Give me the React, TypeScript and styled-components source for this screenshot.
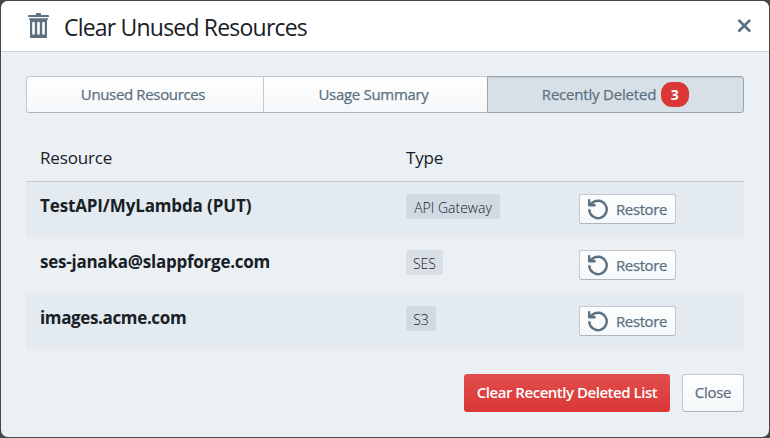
import React from "react";
import styled, { createGlobalStyle, css } from "styled-components";

const GlobalStyle = createGlobalStyle`
  *, *::before, *::after { box-sizing: border-box; }
  body {
    margin: 0;
    background: #44464b;
    color: #182026;
    font-family: "Segoe UI", "Open Sans", "Noto Sans", sans-serif;
    font-size: 15px;
    line-height: 20px;
  }
  button { font: inherit; margin: 0; padding: 0; cursor: pointer; }
`;

const Backdrop = styled.div`
  width: 100vw;
  height: 100vh;
  padding: 1px;
  background: #44464b;
`;

const Dialog = styled.section`
  height: 100%;
  display: flex;
  flex-direction: column;
  border-radius: 7px;
  background: #ebf0f4;
  overflow: hidden;
`;

const Header = styled.header`
  height: 51px;
  flex: none;
  display: flex;
  align-items: center;
  padding: 0 16px 0 27px;
  background: #fff;
  border-bottom: 1px solid #cbd0d4;
`;

const TrashSvg = styled.svg`
  width: 21px;
  height: 26px;
  flex: none;
  margin-right: 15px;
`;

const Title = styled.h1`
  flex: 1;
  margin: 0;
  font-size: 23px;
  font-weight: 400;
  line-height: 30px;
  letter-spacing: -0.8px;
  padding-top: 1px;
`;

const IconButton = styled.button`
  display: flex;
  border: 0;
  background: none;
`;

const Body = styled.main`
  flex: 1;
  padding: 24px 25px 0;
`;

const raised = css`
  border: 1px solid #c5c9cd;
  border-bottom-color: #afb4b9;
  background: linear-gradient(#fefefe, #f5f8fa);
  color: #5c7080;
  -webkit-text-stroke: 0.25px #5c7080;
`;

const Tabs = styled.nav`
  display: grid;
  grid-template-columns: 237px 224px 257px;
  height: 37px;
`;

const Tab = styled.button<{ $active?: boolean }>`
  ${raised}
  display: flex;
  align-items: center;
  justify-content: center;
  gap: 5px;
  border-right-width: 0;
  &:first-child { border-radius: 3px 0 0 3px; }
  &:last-child { border-radius: 0 3px 3px 0; border-right-width: 1px; }
  ${(p) =>
    p.$active &&
    css`
      background: #d8e0e7;
      border-color: #9ba5ae;
      box-shadow: inset 0 1px 1px #c4ccd4;
    `}
`;

const TabLabel = styled.span<{ $track: number; $inset?: number }>`
  padding: 0 ${(p) => p.$inset ?? 0}px 2px 0;
  letter-spacing: ${(p) => p.$track}px;
`;

const Count = styled.span`
  width: 28px;
  height: 25px;
  padding-right: 1px;
  border-radius: 11px;
  background: #db3737;
  color: #fff;
  -webkit-text-stroke: 0;
  font-weight: 700;
  font-size: 14px;
  line-height: 25px;
  text-align: center;
`;

const Table = styled.div`
  margin-top: 24px;
`;

const Row = styled.div<{ $striped?: boolean }>`
  display: grid;
  grid-template-columns: 366px 173px 1fr;
  align-items: start;
  height: 56px;
  padding: 13px 14px 0;
  background: ${(p) => (p.$striped ? "#e3eaf0" : "transparent")};
`;

const HeadRow = styled(Row)`
  height: 44px;
  padding-top: 9px;
  font-size: 17px;
  line-height: 24px;
`;

const Rows = styled.div`
  & > :first-child { box-shadow: inset 0 1px 0 #c5cace; }
`;

const HeadCell = styled.span`
  letter-spacing: -0.15px;
`;

const Name = styled.strong<{ $track: number }>`
  font-size: 17px;
  font-weight: 700;
  line-height: 24px;
  letter-spacing: ${(p) => p.$track}px;
`;

const Tag = styled.span<{ $width: number }>`
  width: ${(p) => p.$width}px;
  height: 25px;
  padding-top: 4px;
  border-radius: 3px;
  background: rgba(138, 155, 168, 0.2);
  font-size: 14px;
  font-weight: 300;
  text-align: center;
  white-space: nowrap;
  letter-spacing: 0;
`;

const RestoreButton = styled.button`
  ${raised}
  width: 97px;
  height: 30px;
  display: flex;
  align-items: center;
  gap: 7px;
  padding-left: 7px;
  border-radius: 3px;
  letter-spacing: -0.4px;
`;

const Footer = styled.footer`
  display: flex;
  justify-content: flex-end;
  gap: 12px;
  margin-top: 25px;
`;

const CloseButton = styled.button`
  ${raised}
  width: 62px;
  height: 38px;
  padding-bottom: 2px;
  border-radius: 3px;
  letter-spacing: -0.3px;
`;

const DangerButton = styled.button`
  width: 206px;
  height: 38px;
  padding-bottom: 2px;
  border: 0;
  border-radius: 3px;
  background: linear-gradient(#e14d4d, #db3737);
  color: #fff;
  font-weight: 600;
  letter-spacing: -0.47px;
`;

const TrashIcon = () => (
  <TrashSvg viewBox="0 0 21 26" aria-hidden="true">
    <path
      fill="#5c7080"
      fillRule="evenodd"
      d="M1 2h7V1q0-1 1-1h3q1 0 1 1v1h7q1 0 1 1v1H0V3q0-1 1-1zM1 5.3h19v1l-1 1V24q0 1-1 1H3q-1 0-1-1V7.3l-1-1zM4.2 10v10.5q0 1.3 1.3 1.3t1.3-1.3V10q0-1.3-1.3-1.3T4.2 10zM9.2 10v10.5q0 1.3 1.3 1.3t1.3-1.3V10q0-1.3-1.3-1.3T9.2 10zM14.2 10v10.5q0 1.3 1.3 1.3t1.3-1.3V10q0-1.3-1.3-1.3T14.2 10z"
    />
  </TrashSvg>
);

const CloseIcon = () => (
  <svg width="17" height="16" viewBox="0 0 17 16" aria-hidden="true">
    <path d="M3.2 2.6l10.2 10.2M13.4 2.6L3.2 12.8" stroke="#5c7080" strokeWidth="2.7" strokeLinecap="round" />
  </svg>
);

const RestoreIcon = () => (
  <svg width="22" height="22" viewBox="0 0 22 22" fill="none" stroke="#5c7080" strokeWidth="2.4" aria-hidden="true">
    <path d="M4.2 6A8.7 8.7 0 1 1 2.3 11.2" />
    <path d="M2.2 2.2v5.1h5.4" strokeLinecap="round" strokeLinejoin="round" />
    <path d="M2.2 3.4v3.9h4z" fill="#5c7080" stroke="none" />
  </svg>
);

const items = [
  { name: "TestAPI/MyLambda (PUT)", track: -0.13, type: "API Gateway", tagWidth: 94 },
  { name: "ses-janaka@slappforge.com", track: -0.24, type: "SES", tagWidth: 37 },
  { name: "images.acme.com", track: -0.36, type: "S3", tagWidth: 30 },
];

export default function App() {
  return (
    <Backdrop>
      <GlobalStyle />
      <Dialog role="dialog" aria-labelledby="dialog-title">
        <Header>
          <TrashIcon />
          <Title id="dialog-title">Clear Unused Resources</Title>
          <IconButton aria-label="Close dialog">
            <CloseIcon />
          </IconButton>
        </Header>
        <Body>
          <Tabs>
            <Tab>
              <TabLabel $track={-0.35} $inset={4}>Unused Resources</TabLabel>
            </Tab>
            <Tab>
              <TabLabel $track={-0.3} $inset={4}>Usage Summary</TabLabel>
            </Tab>
            <Tab $active>
              <TabLabel $track={-0.2}>Recently Deleted</TabLabel>
              <Count>3</Count>
            </Tab>
          </Tabs>
          <Table>
            <HeadRow>
              <HeadCell>Resource</HeadCell>
              <HeadCell>Type</HeadCell>
            </HeadRow>
            <Rows>
              {items.map((item, i) => (
                <Row key={item.name} $striped={i % 2 === 0}>
                  <Name $track={item.track}>{item.name}</Name>
                  <Tag $width={item.tagWidth}>{item.type}</Tag>
                  <RestoreButton>
                    <RestoreIcon />
                    Restore
                  </RestoreButton>
                </Row>
              ))}
            </Rows>
          </Table>
          <Footer>
            <DangerButton>Clear Recently Deleted List</DangerButton>
            <CloseButton>Close</CloseButton>
          </Footer>
        </Body>
      </Dialog>
    </Backdrop>
  );
}
